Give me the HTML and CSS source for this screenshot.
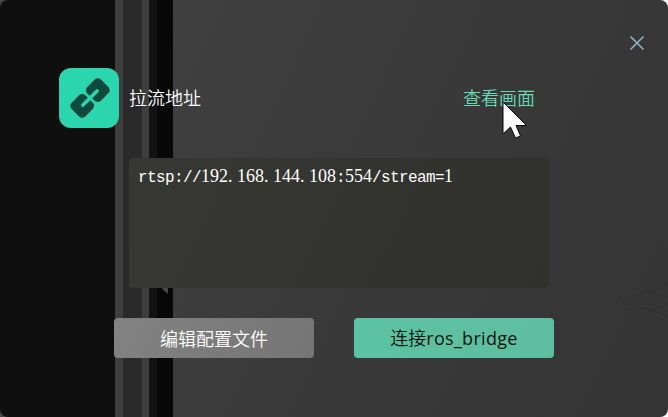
FILE: index.html
```html
<!DOCTYPE html>
<html lang="zh-CN">
<head>
<meta charset="utf-8">
<title>拉流地址</title>
<link rel="stylesheet" href="styles.css">
</head>
<body>
<main class="dialog">
  <svg class="backdrop" width="668" height="417" viewBox="0 0 668 417" aria-hidden="true">
    <path d="M162 289L168 284V294Z" fill="#464646"/>
    <path d="M668 284L623 302L668 316M650 292L668 297M650 311L668 304" fill="none" stroke="#303030"/>
  </svg>
  <header class="topbar">
    <button class="close" aria-label="关闭">
      <svg width="16" height="16" viewBox="0 0 16 16"><path d="M1.500 1.500L14.500 14.500M14.500 1.500L1.500 14.500" fill="none" stroke="#8eb4c6" stroke-width="1.6"/></svg>
    </button>
  </header>
  <section class="heading">
    <div class="badge">
      <svg width="60" height="60" viewBox="0 0 60 60">
        <g transform="translate(31 30) rotate(-45)">
          <rect x="1.300" y="-9.700" width="19.500" height="19.400" rx="4.500" fill="#0c4a3e"/>
          <rect x="-20.800" y="-9.700" width="19.500" height="19.400" rx="4.500" fill="#0c4a3e"/>
          <path d="M1 0H10M-1 0H-10" stroke="#2bd5ae" stroke-width="3.6" stroke-linecap="round"/>
        </g>
      </svg>
    </div>
    <h1 class="title">拉流地址</h1>
    <a class="view">查看画面</a>
  </section>
  <div class="address">rtsp://<span class="digits">192<span class="dot">.</span>168<span class="dot">.</span>144<span class="dot">.</span>108</span>:<span class="digits">554</span>/stream=<span class="digits">1</span></div>
  <footer class="actions">
    <button class="button edit">编辑配置文件</button>
    <button class="button connect">连接<span class="latin">ros_bridge</span></button>
  </footer>
  <svg class="cursor" width="26" height="39" viewBox="0 0 26 39" aria-hidden="true">
    <path d="M1 1V33L8.500 26L13.500 37L18.500 35L14 24.500H24.500Z" fill="#fff" stroke="#080808"/>
  </svg>
</main>
</body>
</html>
```
FILE: styles.css
```css
* { box-sizing: border-box; }
html { background: linear-gradient(90deg, #484848 50%, #fff 50%); }
body { margin: 0; font-family: "Noto Sans CJK SC", sans-serif; font-size: 18px; font-weight: 350; }
.dialog {
  position: relative;
  width: 668px;
  height: 417px;
  overflow: hidden;
  border-radius: 8px;
  background:
    linear-gradient(90deg, #0f0f0f 115px, #3e3e3e 115px 123px, #2a2a2a 123px 142px, #3e3e3e 142px 149px, #121212 149px 157px, #080808 157px 173px, transparent 173px),
    linear-gradient(115deg, #434343, #3a3a3a 50%, #343434);
}
.backdrop { position: absolute; inset: 0; }
.topbar { display: flex; justify-content: flex-end; height: 68px; padding: 35px 23px 0 0; }
.close { display: block; width: 16px; height: 16px; padding: 0; border: 0; background: none; }
.close svg { display: block; }
.heading { display: flex; align-items: center; height: 60px; padding-left: 59px; }
.badge { width: 60px; height: 60px; border-radius: 12px; background: #2bd5ae; }
.badge svg { display: block; }
.title { width: 334px; margin: 0 0 0 10px; padding-bottom: 2px; color: #fff; font-size: 18px; font-weight: 350; line-height: 26px; }
.view { padding-bottom: 2px; color: #68d9b6; line-height: 26px; }
.address {
  position: relative;
  width: 420px;
  height: 130px;
  margin: 30px 0 0 129px;
  padding: 8px 9px;
  border-radius: 4px;
  background: linear-gradient(115deg, #373833, #333430 50%, #30302d);
  color: #fff;
  font: 16px/21px "Liberation Mono", monospace;
  letter-spacing: -.6px;
  white-space: nowrap;
}
.digits { font: 18px/21px "Liberation Serif", serif; letter-spacing: 0; }
.dot { letter-spacing: 4.5px; }
.actions { position: relative; display: flex; gap: 40px; margin: 30px 0 0 114px; }
.button { width: 200px; height: 40px; padding: 0 0 1px; border: 0; border-radius: 4px; font: 350 18px/26px "Noto Sans CJK SC", sans-serif; }
.edit { background: linear-gradient(115deg, #828282, #757575); color: #fff; }
.connect { background: linear-gradient(115deg, #5bc3a2, #5fbda0); color: #07150f; }
.latin { font-family: "Open Sans", sans-serif; font-weight: 400; letter-spacing: .3px; }
.cursor { position: absolute; left: 502px; top: 101px; }
```
